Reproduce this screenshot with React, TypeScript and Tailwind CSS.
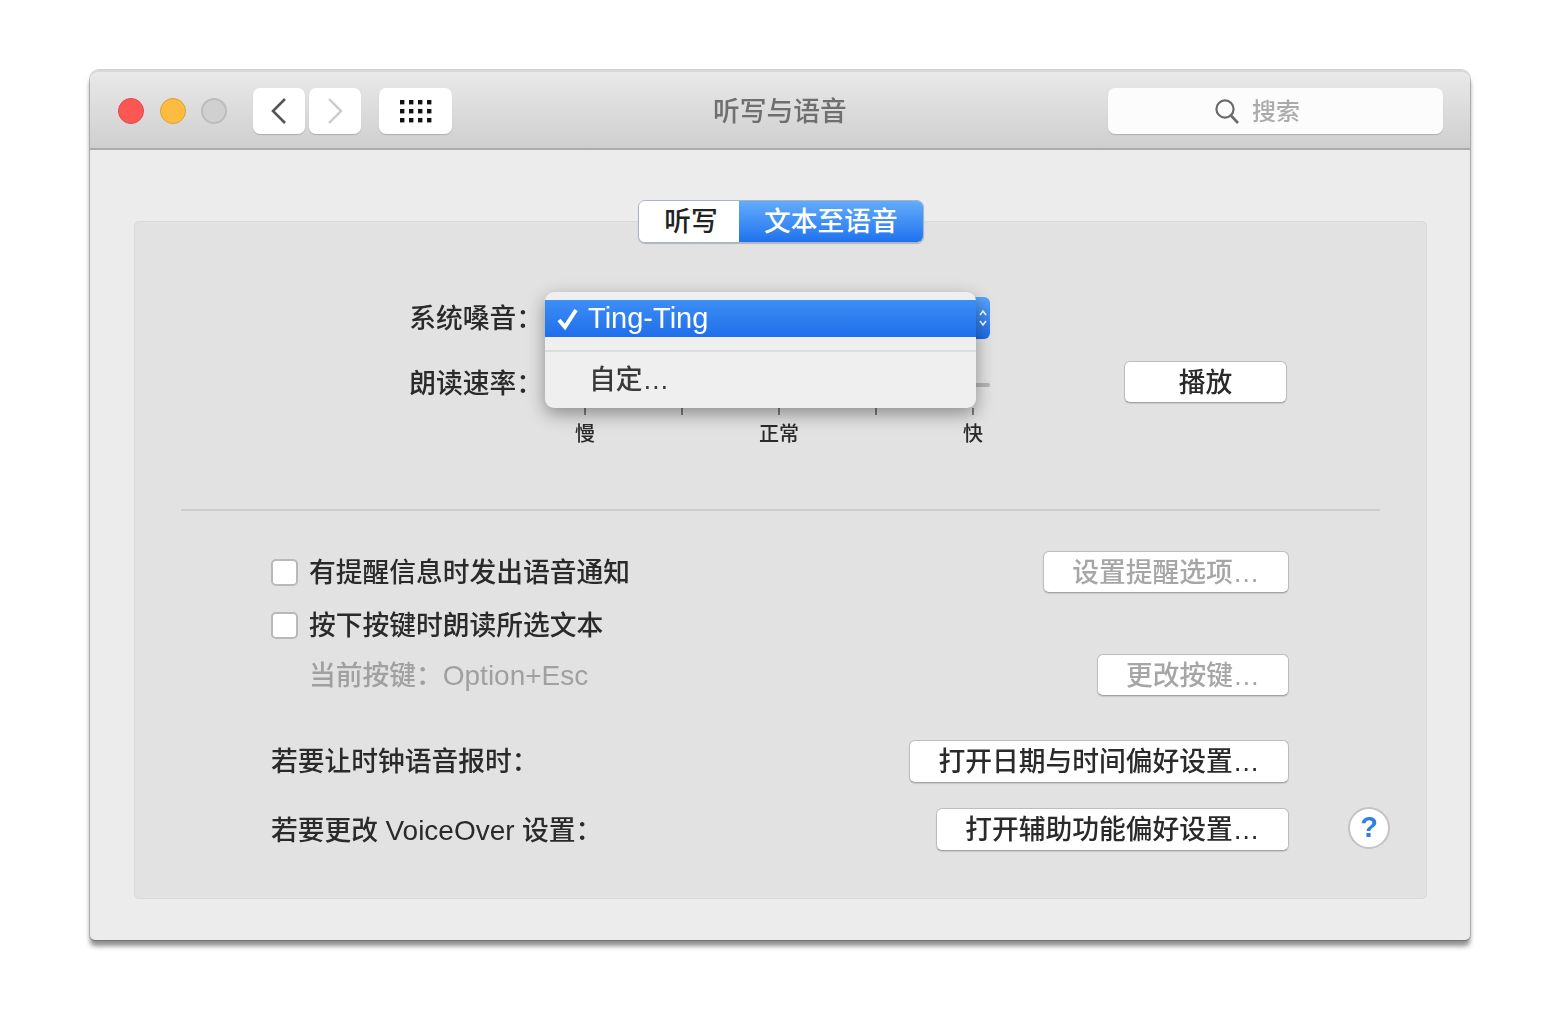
import React from 'react';

function MacButton({ children, disabled, className = '' }: { children: React.ReactNode; disabled?: boolean; className?: string }) {
  return (
    <button
      className={`flex h-[42px] items-center justify-center rounded-[6px] border border-[#bdbdbd] border-b-[#a4a4a4] bg-white pt-[2px] text-[26.75px] shadow-[0_1px_1px_rgba(0,0,0,0.12)] ${
        disabled ? 'bg-[#eeeeee] text-[#a6a6a6]' : 'text-[#2a2a2a]'
      } ${className}`}
    >
      {children}
    </button>
  );
}

function Checkbox() {
  return <div className="h-[27px] w-[27px] shrink-0 rounded-[5px] border-2 border-[#b9b9b9] bg-white" />;
}

function ToolbarButton({ children, className = '' }: { children: React.ReactNode; className?: string }) {
  return (
    <div className={`flex h-[46px] items-center justify-center rounded-[7px] bg-white shadow-[0_1px_1px_rgba(0,0,0,0.18)] ${className}`}>
      {children}
    </div>
  );
}

function TitleBar() {
  return (
    <div className="flex h-[78px] shrink-0 items-center border-b-2 border-[#ababab] bg-gradient-to-b from-[#e9e9e9] to-[#cfcfcf] pl-[28px] pr-[27px] pt-[2px]">
      <div className="h-[26px] w-[26px] rounded-full border border-[#df4744] bg-[#fc5753]" />
      <div className="ml-[16px] h-[26px] w-[26px] rounded-full border border-[#de9f34] bg-[#fdbc40]" />
      <div className="ml-[15px] h-[26px] w-[26px] rounded-full border-2 border-[#bcbcbc] bg-[#d0d0d0]" />
      <ToolbarButton className="ml-[26px] w-[52px]">
        <svg width="18" height="28" viewBox="0 0 18 28" fill="none">
          <path d="M15 2 3 14l12 12" stroke="#555555" strokeWidth="2.6" />
        </svg>
      </ToolbarButton>
      <ToolbarButton className="ml-[4px] w-[52px]">
        <svg width="18" height="28" viewBox="0 0 18 28" fill="none">
          <path d="m3 2 12 12L3 26" stroke="#cbcbcb" strokeWidth="2.4" />
        </svg>
      </ToolbarButton>
      <ToolbarButton className="ml-[18px] w-[73px]">
        <svg width="32" height="24" viewBox="0 0 32 24" fill="#111111">
          {[0, 1, 2].map((r) =>
            [0, 1, 2, 3].map((c) => <rect key={`${r}-${c}`} x={c * 9} y={r * 9 + 1} width="4.4" height="4.4" />),
          )}
        </svg>
      </ToolbarButton>
      <div className="flex-1 pt-[2px] text-center text-[26.75px] text-[#6f6f6f]">听写与语音</div>
      <div className="flex h-[46px] w-[335px] items-center rounded-[7px] bg-[#fcfcfc] pl-[106px] text-[24px] text-[#ababab] shadow-[0_1px_1px_rgba(0,0,0,0.18)]">
        <svg width="26" height="28" viewBox="0 0 26 28" fill="none">
          <circle cx="11" cy="12" r="8.6" stroke="#6a6a6a" strokeWidth="2.2" />
          <path d="m17 18.5 7 7.5" stroke="#6a6a6a" strokeWidth="2.6" />
        </svg>
        <span className="ml-[12px] pt-[2px]">搜索</span>
      </div>
    </div>
  );
}

function PopupMenu() {
  return (
    <div className="absolute left-[410px] top-[-5px] z-10 h-[116px] w-[431px] rounded-[9px] bg-[#efefef] pt-[8px] shadow-[0_6px_18px_rgba(0,0,0,0.38)]">
      <div className="flex h-[37px] items-center bg-gradient-to-b from-[#3d8ef6] to-[#1f6eea] pl-[12px] text-[29px] text-white">
        <svg width="22" height="22" viewBox="0 0 22 22" fill="none">
          <path d="m2 12 6 7L19 2" stroke="#ffffff" strokeWidth="4" />
        </svg>
        <span className="ml-[9px]">Ting-Ting</span>
      </div>
      <div className="mt-[13px] h-[2px] bg-[#dcdcdc]" />
      <div className="flex h-[56px] items-center pl-[44px] text-[26.75px] text-[#3a3a3a]">自定…</div>
    </div>
  );
}

function VoiceSection() {
  const ticks = ['慢', '', '正常', '', '快'];
  return (
    <div className="relative mt-[54px]">
      <PopupMenu />
      <div className="flex h-[42px] items-center">
        <div className="w-[408px] pt-[2px] text-right text-[26.75px] text-[#2a2a2a]">系统嗓音：</div>
        <div className="ml-[2px] flex h-[42px] w-[445px] items-center justify-end rounded-[6px] bg-gradient-to-b from-[#58a4fb] to-[#1c6ae6] pr-[2px]">
          <svg width="10" height="24" viewBox="0 0 10 24" fill="none">
            <path d="m2 9 3-4 3 4M2 15l3 4 3-4" stroke="#ffffff" strokeWidth="1.6" />
          </svg>
        </div>
      </div>
      <div className="mt-[22px] flex h-[42px] items-center">
        <div className="w-[408px] translate-y-[2px] text-right text-[26.75px] text-[#2a2a2a]">朗读速率：</div>
        <div className="ml-[2px] h-[4px] w-[445px] translate-y-[3px] rounded-full bg-[#b5b5b5]" />
        <MacButton className="ml-[134px] w-[163px]">播放</MacButton>
      </div>
      <div className="ml-[449px] mt-[5px] flex h-[50px] w-[390px] justify-between">
        {ticks.map((label, i) => (
          <div key={i} className="flex w-[2px] flex-col items-center">
            <div className="h-[7px] w-[2px] shrink-0 bg-[#7d7d7d]" />
            <div className="mt-[6px] whitespace-nowrap text-[20px] leading-[26px] text-[#2a2a2a]">{label}</div>
          </div>
        ))}
      </div>
    </div>
  );
}

function OptionsSection() {
  return (
    <div className="flex flex-col pl-[136px] text-[26.75px] text-[#2a2a2a]">
      <div className="flex h-[42px] items-center pr-[137px]">
        <Checkbox />
        <span className="ml-[11px] pt-[2px]">有提醒信息时发出语音通知</span>
        <MacButton disabled className="ml-auto w-[246px]">设置提醒选项…</MacButton>
      </div>
      <div className="mt-[11px] flex h-[42px] items-center">
        <Checkbox />
        <span className="ml-[11px] pt-[2px]">按下按键时朗读所选文本</span>
      </div>
      <div className="mt-[8px] flex h-[42px] items-center pr-[137px]">
        <span className="ml-[38px] pt-[2px] text-[#a0a0a0]">
          当前按键：<span className="text-[28px]">Option+Esc</span>
        </span>
        <MacButton disabled className="ml-auto w-[192px]">更改按键…</MacButton>
      </div>
      <div className="mt-[44px] flex h-[43px] items-center pr-[137px]">
        <span className="pt-[2px]">若要让时钟语音报时：</span>
        <MacButton className="ml-auto !h-[43px] w-[380px]">打开日期与时间偏好设置…</MacButton>
      </div>
      <div className="mt-[25px] flex h-[43px] items-center pr-[36px]">
        <span className="pt-[2px]">
          若要更改 <span className="text-[28px]">VoiceOver</span> 设置：
        </span>
        <MacButton className="ml-auto !h-[43px] w-[353px]">打开辅助功能偏好设置…</MacButton>
        <div className="ml-[59px] flex h-[42px] w-[42px] -translate-y-[2px] items-center justify-center rounded-full border-2 border-[#c4c4c4] bg-white text-[29px] font-bold text-[#2f7fe6]">
          ?
        </div>
      </div>
    </div>
  );
}

export default function App() {
  return (
    <div className="h-[1035px] overflow-hidden bg-white pl-[90px] pt-[70px] font-['Liberation_Sans','Noto_Sans_CJK_SC',sans-serif] font-medium">
      <div className="flex h-[870px] w-[1380px] flex-col overflow-visible rounded-t-[9px] rounded-b-[5px] bg-[#ececec] shadow-[0_0_0_1px_rgba(0,0,0,0.18),0_6px_5px_rgba(0,0,0,0.45)] blur-[0.7px]">
        <div className="overflow-hidden rounded-t-[9px] border-t-2 border-[#d8d8d8]">
          <TitleBar />
        </div>
        <div className="mx-[44px] mt-[71px] flex h-[678px] w-[1293px] flex-col rounded-[5px] border border-[#dadada] bg-[#e2e2e2]">
          <div className="-mt-[22px] ml-px flex h-[43px] self-center overflow-hidden rounded-[7px] border border-[#a9b4c4] text-[26.75px] shadow-[0_1px_1px_rgba(0,0,0,0.2)]">
            <div className="flex w-[100px] items-center justify-center bg-white pl-[4px] pt-[2px] text-[#222222]">听写</div>
            <div className="flex w-[184px] items-center justify-center bg-gradient-to-b from-[#62abfb] to-[#1f72ee] pt-[2px] text-white">文本至语音</div>
          </div>
          <VoiceSection />
          <div className="mx-[46px] mt-[51px] mb-[40px] h-[2px] bg-[#cdcdcd]" />
          <OptionsSection />
        </div>
      </div>
    </div>
  );
}
